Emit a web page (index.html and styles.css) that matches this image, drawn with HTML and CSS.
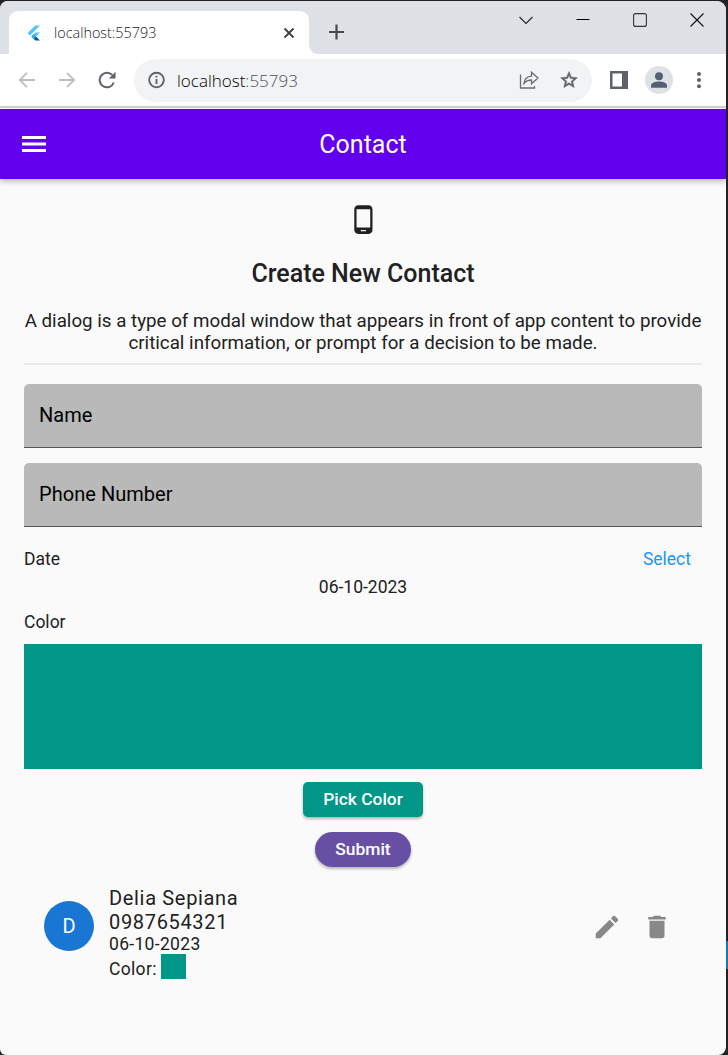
FILE: index.html
```html
<!DOCTYPE html>
<html lang="en">
<head>
<meta charset="utf-8">
<title>Contact</title>
<link rel="stylesheet" href="styles.css">
</head>
<body>
<div class="window">
  <div class="tabstrip">
    <div class="tab">
      <svg class="favicon" width="16" height="16" viewBox="0 0 16 16"><path d="M9.3 0.5H14L4 10.4 1.6 8z" fill="#54c5f8"/><path d="M9.3 7.6H14L10 11.6 7.8 9.2z" fill="#54c5f8"/><path d="M5.4 11.6L7.8 9.3 14 15.5H9.3z" fill="#01579b"/><path d="M5.4 11.6l2.4-2.3 2.3 2.3-2.3 2.3z" fill="#29b6f6"/></svg>
      <span class="tab-title">localhost:55793</span>
      <svg class="tab-close" width="12" height="12" viewBox="0 0 12 12"><path d="M1.5 1.5l9 9M10.5 1.5l-9 9" stroke="#3c4043" stroke-width="1.8"/></svg>
    </div>
    <svg class="tab-curve" width="9" height="10" viewBox="0 0 9 10"><path d="M0 0C0 6 4 10 9 10H0z" fill="#fff"/></svg>
    <svg class="new-tab" width="16" height="16" viewBox="0 0 16 16"><path d="M8.500 .5v15M1 8h15" stroke="#45494d" stroke-width="2.200"/></svg>
    <div class="controls">
      <svg width="14" height="14" viewBox="0 0 14 14"><path d="M.5 4L7 10.500 13.500 4" fill="none" stroke="#222" stroke-width="1.100"/></svg>
      <svg width="14" height="14" viewBox="0 0 14 14"><path d="M.5 6.500h13" stroke="#000"/></svg>
      <svg width="14" height="14" viewBox="0 0 14 14"><rect x=".6" y=".6" width="12.800" height="12.800" rx="2" fill="none" stroke="#333" stroke-width="1.100"/></svg>
      <svg width="14" height="14" viewBox="0 0 14 14"><path d="M.5.5l13 13M13.500.5l-13 13" stroke="#111" stroke-width="1.100"/></svg>
    </div>
  </div>
  <div class="toolbar">
    <svg class="nav" width="18" height="18" viewBox="0 0 18 18"><path d="M17 9H2M9 1.800L1.800 9 9 16.200" fill="none" stroke="#bcbec0" stroke-width="1.800"/></svg>
    <svg class="nav" width="18" height="18" viewBox="0 0 18 18"><path d="M1 9h15M9 1.800L16.200 9 9 16.200" fill="none" stroke="#bcbec0" stroke-width="1.800"/></svg>
    <svg class="nav" width="18" height="18" viewBox="0 0 18 18"><path d="M15.800 11.500A7.300 7.300 0 1 1 14.200 3.900" fill="none" stroke="#5f6368" stroke-width="2"/><path d="M17.500.8v6.700h-6.700z" fill="#5f6368"/></svg>
    <div class="address">
      <svg class="info" width="18" height="18" viewBox="0 0 18 18"><circle cx="9.500" cy="9" r="7.300" fill="none" stroke="#5f6368" stroke-width="1.900"/><path d="M9.500 8v5M9.500 4.800v1.800" stroke="#5f6368" stroke-width="1.900"/></svg>
      <span class="url">localhost<span class="port">:55793</span></span>
      <svg class="share" width="20" height="20" viewBox="0 0 20 20"><path d="M1.500 4.500v13.500h14v-2M5 13.500c.5-5 3-7 7.500-7.300V2.300L19 8l-6.500 5.700V10C9 10 7 11 5 13.500z" fill="none" stroke="#6a6e72" stroke-width="1.300"/></svg>
      <svg class="star" width="20" height="20" viewBox="0 0 24 24"><path d="M22 9.240l-7.190-.62L12 2 9.190 8.630 2 9.240l5.460 4.730L5.820 21 12 17.270 18.180 21l-1.630-7.030L22 9.240zM12 15.400l-3.760 2.270 1-4.280-3.320-2.880 4.380-.38L12 6.100l1.710 4.040 4.380.38-3.320 2.880 1 4.280L12 15.400z" fill="#5f6368" stroke="#5f6368" stroke-width=".7"/></svg>
    </div>
    <svg class="panel" width="18" height="18" viewBox="0 0 18 18"><rect x="1.250" y="1.250" width="15.500" height="15.500" fill="#fff" stroke="#5f6368" stroke-width="2.500"/><path d="M12 1h6v16h-6z" fill="#5f6368"/></svg>
    <svg class="profile" width="28" height="28" viewBox="0 0 28 28"><circle cx="14" cy="14" r="14" fill="#dee1e6"/><circle cx="14" cy="10.200" r="4" fill="#536074"/><path d="M6 21.800v-2.200c0-2.700 4.500-4 8-4s8 1.300 8 4v2.200z" fill="#536074"/></svg>
    <svg class="more" width="4" height="18" viewBox="0 0 4 18"><circle cx="2" cy="3" r="2" fill="#5f6368"/><circle cx="2" cy="9" r="2" fill="#5f6368"/><circle cx="2" cy="15.200" r="2" fill="#5f6368"/></svg>
  </div>
  <header class="appbar">
    <svg class="menu" width="24" height="16" viewBox="0 0 24 16"><path d="M0 1.500h24M0 8h24M0 14.500h24" stroke="#fff" stroke-width="3"/></svg>
    <h1 class="appbar-title">Contact</h1>
  </header>
  <main class="content">
    <svg class="phone" width="32" height="32" viewBox="0 0 24.600 24.600"><path d="M16.600 1H8.600C6.940 1 5.600 2.340 5.600 4v16c0 1.660 1.340 3 3 3h8c1.660 0 3-1.340 3-3V4c0-1.660-1.340-3-3-3zm-2 20h-4v-1h4v1zm3.250-3H7.350V4h10.500v14z" fill="#212121"/></svg>
    <h2 class="heading">Create New Contact</h2>
    <p class="desc">A dialog is a type of modal window that appears in front of app content to provide<br>critical information, or prompt for a decision to be made.</p>
    <hr class="divider">
    <div class="field"><span>Name</span></div>
    <div class="field"><span>Phone Number</span></div>
    <div class="row"><span>Date</span><a class="select">Select</a></div>
    <div class="date">06-10-2023</div>
    <div class="color-label">Color</div>
    <div class="swatch"></div>
    <button class="btn pick">Pick Color</button>
    <button class="btn submit">Submit</button>
    <div class="contact">
      <div class="avatar">D</div>
      <div class="details">
        <div class="name">Delia Sepiana</div>
        <div class="number">0987654321</div>
        <div class="when">06-10-2023</div>
        <div class="color"><span>Color:</span><i class="chip"></i></div>
      </div>
      <svg class="edit" width="30" height="30" viewBox="0 0 24 24"><path d="M3 17.250V21h3.750L17.810 9.940l-3.750-3.750L3 17.250zM20.710 7.040c.39-.39.39-1.020 0-1.410l-2.340-2.340c-.39-.39-1.020-.39-1.410 0l-1.830 1.830 3.750 3.750 1.830-1.830z" fill="#888"/></svg>
      <svg class="delete" width="30" height="30" viewBox="0 0 24 24"><path d="M6 19c0 1.100.9 2 2 2h8c1.100 0 2-.9 2-2V7H6v12zM19 4h-3.500l-1-1h-5l-1 1H5v2h14V4z" fill="#888"/></svg>
    </div>
  </main>
</div>
</body>
</html>
```
FILE: styles.css
```css
* { box-sizing: border-box; }
body {
  margin: 0;
  height: 1055px;
  padding: 1px 2px 0 0;
  overflow: hidden;
  background: linear-gradient(#1976b8, #1976b8) right 0 top 941px / 2px 28px no-repeat, #242224;
  font-family: Roboto, "Liberation Sans", sans-serif;
  color: #212121;
}
.window { height: 1054px; border-radius: 8px 9px 8px 6px; overflow: hidden; background: #fafafa; }
svg { flex: none; display: block; }

.tabstrip { display: flex; height: 53px; background: #dee1e6; }
.tab {
  display: flex; align-items: center;
  width: 300px; height: 43px; margin: 10px 0 0 9px; padding: 0 14px 0 17px;
  background: #fff; border-radius: 9px 9px 0 0;
}
.tab-title { margin-left: 12px; flex: 1; font: 300 14.400px "Open Sans", sans-serif; color: #202124; white-space: nowrap; }
.tab-curve { align-self: flex-end; }
.new-tab { margin: 23px 0 0 10px; }
.controls { display: flex; gap: 43px; margin: 12px 22px 0 auto; }

.toolbar { display: flex; align-items: center; height: 54px; padding: 0 25px 0 18px; background: #fff; border-bottom: 2px solid #d8d8d8; }
.nav { margin-right: 22px; }
.address { display: flex; align-items: center; width: 458px; height: 43px; margin-left: -4px; padding: 0 13px; border-radius: 22px; background: #f1f3f4; }
.url { flex: 1; margin-left: 12px; font: 300 17px "Open Sans", sans-serif; color: #000; white-space: nowrap; }
.port { color: #4c5054; }
.star { margin-left: 20px; }
.panel { margin-left: 18px; }
.profile { margin-left: 17px; }
.more { margin-left: auto; }

.appbar {
  position: relative; display: grid; grid-template-columns: 24px 1fr 24px; align-items: center;
  height: 71px; padding: 0 22px; border-top: 1px solid #fff;
  background: #6200ee; color: #fff; box-shadow: 0 2px 6px rgba(0,0,0,.3);
}
.appbar-title { margin: 0; text-align: center; font-size: 25px; font-weight: 400; }

.content { display: flex; flex-direction: column; align-items: stretch; padding: 25px 24px 0; }
.phone { align-self: center; }
.heading { margin: 22px 0 0; height: 32px; line-height: 32px; text-align: center; font-size: 25px; font-weight: 500; white-space: nowrap; }
.desc { margin: 20px -10px 0; text-align: center; font-size: 18.750px; line-height: 22px; white-space: nowrap; }
.divider { width: 100%; height: 2px; margin: 9px 0 19px; border: 0; background: #eaeaea; }
.field { display: flex; align-items: center; height: 64px; margin-bottom: 15px; padding: 0 15px 2px; border-radius: 5px 5px 0 0; border-bottom: 1px solid #555; background: #b9b9b9; color: #000; font-size: 20px; letter-spacing: .04px; }
.row { display: flex; justify-content: space-between; padding-right: 11px; margin-top: 6px; height: 22px; line-height: 22px; font-size: 17.500px; }
.select { color: #2196f3; }
.date { margin-top: 6px; height: 22px; line-height: 22px; text-align: center; font-size: 17.500px; }
.color-label { margin-top: 13px; height: 22px; line-height: 22px; font-size: 17.500px; }
.swatch { height: 125px; margin-top: 11px; background: #009688; }
.btn { align-self: center; height: 35px; padding: 0 0 1px; border: 0; color: #fff; font: 500 17.400px Roboto, sans-serif; box-shadow: 0 2px 3px rgba(0,0,0,.28); }
.pick { width: 120px; margin-top: 12.500px; border-radius: 5px; background: #009688; }
.submit { width: 96px; margin-top: 15px; border-radius: 18px; background: #6750a4; }

.contact { display: flex; align-items: flex-start; padding: 19.500px 30px 0 20px; }
.avatar { display: flex; align-items: center; justify-content: center; width: 50px; height: 50px; margin-top: 15px; border-radius: 50%; background: #1976d2; color: #fff; font-size: 20px; }
.details { flex: 1; margin-left: 15px; letter-spacing: .32px; font-size: 17.500px; }
.name, .number { height: 24px; line-height: 24px; font-size: 20px; letter-spacing: .67px; }
.when { height: 20px; line-height: 20px; }
.color { display: flex; align-items: center; gap: 4.500px; height: 25px; }
.color span { padding-top: 4px; }
.chip { width: 25px; height: 25px; background: #009688; }
.edit, .delete { margin-top: 26px; }
.delete { margin-left: 20px; }
```
